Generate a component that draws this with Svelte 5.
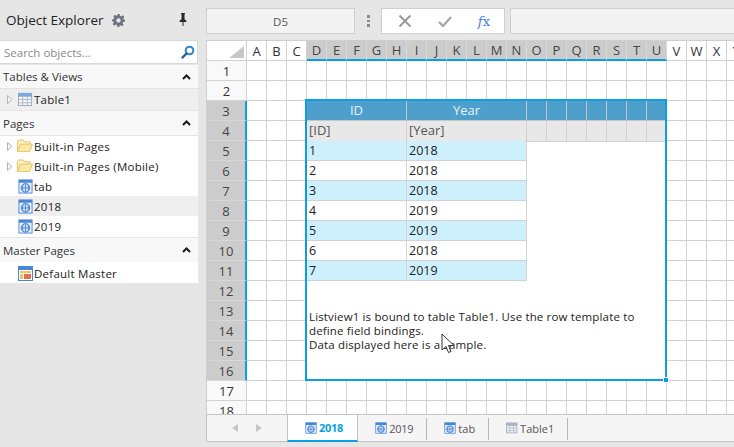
<script>
  const letters = 'ABCDEFGHIJKLMNOPQRSTUVWXY'.split('');
  const rowNums = Array.from({ length: 18 }, (_, i) => i + 1);
  const data = [
    [1, 2018], [2, 2018], [3, 2018], [4, 2019], [5, 2019], [6, 2018], [7, 2019]
  ];
  const extraCols = 7;
  const tabs = [
    { label: '2018', icon: 'page', active: true, num: true },
    { label: '2019', icon: 'page', num: true },
    { label: 'tab', icon: 'page' },
    { label: 'Table1', icon: 'table' }
  ];
  const isSelCol = (i) => i >= 3 && i <= 20;
  const isSelRow = (n) => n >= 3 && n <= 16;
</script>

{#snippet pageIcon(size = 16)}
  <svg class="ico" width={size} height={size} viewBox="0 0 16 16">
    <rect x="1" y="1" width="14" height="14" fill="#eaf2fd" stroke="#4a86d8" />
    <rect x="1" y="1" width="14" height="3" fill="#4a86d8" />
    <circle cx="8" cy="9.5" r="4.6" fill="#cfe0f7" stroke="#3f78c9" />
    <path d="M3.4 9.5h9.2M8 5v9M5.8 5.6c-1.4 2.4-1.4 5.4 0 7.8M10.2 5.6c1.4 2.4 1.4 5.4 0 7.8" fill="none" stroke="#3f78c9" stroke-width=".8" />
  </svg>
{/snippet}

{#snippet tableIcon(color = '#4a86d8', size = 16)}
  <svg class="ico" width={size} height={size} viewBox="0 0 16 16">
    <rect x=".5" y="1.5" width="14" height="13" fill="#f4f6fa" stroke="#9aa6b8" />
    <rect x=".5" y="1.5" width="14" height="3" fill={color} stroke={color} />
    <path d="M5 4.5v10M10 4.5v10M.5 8h14M.5 11.5h14" fill="none" stroke="#aeb6c4" />
  </svg>
{/snippet}

{#snippet folderIcon()}
  <svg class="ico" width="16" height="14" viewBox="0 0 17 15">
    <path d="M.5 13.5V2.5l1-1.5h5l1.5 2h6v2" fill="#fdf0c0" stroke="#e3bf62" />
    <path d="M.5 13.5L3.500 5.500h13l-3 8z" fill="#fde9a6" stroke="#e3bf62" />
  </svg>
{/snippet}

{#snippet caret()}
  <svg class="caret" width="6" height="9" viewBox="0 0 6 9">
    <path d="M.5.5L5 4.500.5 8.500z" fill="#f6f6f6" stroke="#b4b4b4" />
  </svg>
{/snippet}

{#snippet chevron()}
  <svg width="9" height="6" viewBox="0 0 9 6">
    <path d="M1 5l3.500-3.500L8 5" fill="none" stroke="#1a1a1a" stroke-width="2" />
  </svg>
{/snippet}

<div class="app">
  <aside class="explorer">
    <header class="explorer-head">
      <span class="explorer-title">Object Explorer</span>
      <svg class="gear" width="13" height="13" viewBox="0 0 24 24">
        <path fill-rule="evenodd" fill="#6d7480" d="M10 0h4l.7 3.400 2.300 1 2.900-1.900 2.800 2.800-1.900 2.900 1 2.300L24 10v4l-3.400.7-1 2.300 1.900 2.900-2.800 2.800-2.900-1.900-2.300 1L14 24h-4l-.7-3.400-2.300-1-2.900 1.900-2.800-2.800 1.900-2.900-1-2.300L0 14v-4l3.200-.7 1-2.300-1.900-2.900 2.800-2.800 2.900 1.900 2.300-1zM12 8a4 4 0 100 8 4 4 0 000-8z" />
      </svg>
      <svg class="pin" width="8" height="13" viewBox="0 0 8 13">
        <path d="M2 0h4v1H5.500v5L7.500 8v1H4.500v4h-1V9H.5V8l2-2V1H2z" fill="#2b2b2b" />
      </svg>
    </header>

    <div class="search">
      <span>Search objects...</span>
      <svg width="14" height="14" viewBox="0 0 14 14">
        <circle cx="8.500" cy="5.500" r="3.800" fill="none" stroke="#2a86d6" stroke-width="2" />
        <path d="M5.500 8.500L1.500 12.500" stroke="#1d5f9e" stroke-width="2.400" stroke-linecap="round" />
      </svg>
    </div>

    <div class="section-head first"><span>Tables &amp; Views</span>{@render chevron()}</div>
    <div class="item tinted table-item">{@render caret()}{@render tableIcon('#7fa8e0', 15)}<span>Table1</span></div>

    <div class="section-head pages-head"><span>Pages</span>{@render chevron()}</div>
    <div class="tree">
      <div class="item">{@render caret()}{@render folderIcon()}<span>Built-in Pages</span></div>
      <div class="item">{@render caret()}{@render folderIcon()}<span>Built-in Pages (Mobile)</span></div>
      <div class="item leaf">{@render pageIcon(15)}<span>tab</span></div>
      <div class="item leaf tinted">{@render pageIcon(15)}<span>2018</span></div>
      <div class="item leaf">{@render pageIcon(15)}<span>2019</span></div>
    </div>

    <div class="section-head master-head"><span>Master Pages</span>{@render chevron()}</div>
    <div class="tree master">
      <div class="item leaf">
        <svg class="ico" width="15" height="15" viewBox="0 0 15 15">
          <rect x=".5" y=".5" width="14" height="14" fill="#fff" stroke="#4a86d8" />
          <rect x="1" y="1" width="13" height="3" fill="#4a86d8" />
          <rect x="2" y="5" width="11" height="2" fill="#f3c35a" />
          <rect x="2" y="8" width="3" height="5" fill="#f3c35a" />
          <rect x="6" y="8" width="7" height="5" fill="#e2704e" />
        </svg>
        <span>Default Master</span>
      </div>
    </div>
  </aside>

  <main class="workspace">
    <div class="toolbar">
      <div class="name-box">D5</div>
      <div class="dots"><i></i><i></i><i></i></div>
      <div class="formula-actions">
        <svg width="14" height="14" viewBox="0 0 14 14">
          <path d="M1.500 1.500l11 11M12.500 1.500l-11 11" stroke="#9a9a9a" stroke-width="2" />
        </svg>
        <svg width="14" height="11" viewBox="0 0 14 11">
          <path d="M1 6l4 4 8-9" fill="none" stroke="#a8a8a8" stroke-width="2.400" />
        </svg>
        <span class="fx"><em>f</em>x</span>
      </div>
      <div class="formula-input"></div>
    </div>

    <div class="sheet-wrap">
      <div class="sheet">
        <div class="corner">
          <svg width="15" height="12" viewBox="0 0 15 12"><path d="M15 0v12H0z" fill="#c8c8c8" /></svg>
        </div>
        {#each letters as l, i}
          <div class="col-head" class:sel={isSelCol(i)}>{l}</div>
        {/each}
        {#each rowNums as n}
          <div class="row-head" class:sel={isSelRow(n)}>{n}</div>
          {#each letters as _}
            <div class="cell"></div>
          {/each}
        {/each}

        <div class="listview">
          <div class="lv-cols lv-header">
            <div class="lv-id">ID</div>
            <div class="lv-year">Year</div>
            {#each Array(extraCols) as _}<div class="lv-extra"></div>{/each}
          </div>
          <div class="lv-cols lv-template">
            <div>[ID]</div>
            <div>[Year]</div>
            {#each Array(extraCols) as _}<div class="lv-extra"></div>{/each}
          </div>
          {#each data as row, i}
            <div class="lv-row" class:alt={i % 2 === 0}>
              <div>{row[0]}</div>
              <div>{row[1]}</div>
            </div>
          {/each}
          <p class="lv-note">
            Listview1 is bound to table Table1. Use the row template to<br />
            define field bindings.<br />
            Data displayed here is a sample.
          </p>
          <span class="handle"></span>
        </div>

        <svg class="cursor" width="16" height="22" viewBox="0 0 16 22">
          <path d="M1 1v16l4-3.500 2.500 6 2.500-1-2.500-6h5.500z" fill="#fff" stroke="#333" stroke-width="1" />
        </svg>
      </div>
    </div>

    <nav class="tabs">
      <div class="tab-arrows">
        <svg width="6" height="8" viewBox="0 0 6 8"><path d="M6 0v8L0 4z" fill="#c4c4c4" /></svg>
        <svg width="6" height="8" viewBox="0 0 6 8"><path d="M0 0v8l6-4z" fill="#c4c4c4" /></svg>
      </div>
      {#each tabs as t}
        <div class="tab" class:active={t.active} class:num={t.num}>
          {#if t.icon === 'page'}{@render pageIcon(12)}{:else}{@render tableIcon('#a9b4c4', 12)}{/if}
          <span>{t.label}</span>
        </div>
      {/each}
    </nav>
  </main>
</div>

<style>
  :global(body) {
    margin: 0;
    background: #e6e6e6;
  }

  .app {
    display: flex;
    width: 734px;
    height: 447px;
    overflow: hidden;
    font-family: "Open Sans", "Noto Sans", sans-serif;
    color: #222;
    background: #e6e6e6;
  }

  .ico {
    flex: none;
  }

  /* left panel */
  .explorer {
    flex: none;
    width: 198px;
    display: flex;
    flex-direction: column;
  }

  .explorer-head {
    height: 40px;
    display: flex;
    align-items: center;
    padding: 0 0 0 6px;
    box-sizing: border-box;
  }

  .explorer-title {
    font-size: 13.500px;
  }

  .gear {
    margin-left: 8px;
  }

  .pin {
    margin-left: 54px;
    margin-top: -2px;
  }

  .search {
    height: 24px;
    box-sizing: border-box;
    border: 1px solid #d8d8d8;
    border-left: 0;
    background: #fff;
    display: flex;
    align-items: center;
    justify-content: space-between;
    padding: 0 2px 0 4px;
    font-size: 11.500px;
    color: #8a8a8a;
  }

  .section-head {
    height: 24px;
    box-sizing: border-box;
    display: flex;
    align-items: center;
    justify-content: space-between;
    padding: 0 7px 0 3px;
    background: #f8f8f8;
    border-bottom: 1px solid #e4e4e4;
    font-size: 11.500px;
    color: #333;
  }

  .first {
    margin-top: 1px;
  }

  .pages-head {
    height: 25px;
    margin-top: 1px;
  }

  .master-head {
    height: 25px;
    border-top: 1px solid #e4e4e4;
    border-bottom: 0;
  }

  .tree {
    background: #fff;
    padding-bottom: 1px;
  }

  .master {
    padding: 1px 0 0;
  }

  .item {
    height: 20px;
    display: flex;
    align-items: center;
    padding-left: 7px;
    font-size: 11.500px;
    color: #222;
    letter-spacing: .25px;
  }

  .item span {
    margin-left: 1px;
  }

  .item.leaf {
    padding-left: 18px;
  }

  .item.tinted {
    background: #efefef;
  }

  .table-item {
    height: 21px;
    padding-left: 7px;
  }

  .caret {
    margin-right: 4px;
  }

  .table-item .caret {
    margin-right: 5px;
  }

  /* right side */
  .workspace {
    flex: 1;
    min-width: 0;
    margin-left: 8px;
    display: flex;
    flex-direction: column;
    padding-bottom: 5px;
  }

  .toolbar {
    height: 40px;
    flex: none;
    display: flex;
    align-items: flex-start;
    padding-top: 8px;
    box-sizing: border-box;
  }

  .name-box {
    width: 149px;
    height: 26px;
    box-sizing: border-box;
    border: 1px solid #cfcfcf;
    background: #f3f3f3;
    font-size: 11.500px;
    color: #555;
    display: flex;
    align-items: center;
    justify-content: center;
  }

  .dots {
    width: 26px;
    height: 26px;
    display: flex;
    flex-direction: column;
    align-items: center;
    justify-content: center;
    gap: 2px;
  }

  .dots i {
    width: 3px;
    height: 2.500px;
    background: #8a8a8a;
  }

  .formula-actions {
    width: 124px;
    height: 26px;
    box-sizing: border-box;
    border: 1px solid #cfcfcf;
    background: #fff;
    display: flex;
    align-items: center;
    justify-content: space-between;
    padding: 0 14px 0 16px;
  }

  .fx {
    font-family: "DejaVu Serif", "Liberation Serif", serif;
    font-size: 13px;
    color: #3f80e0;
  }

  .formula-input {
    flex: 1;
    height: 26px;
    margin-left: 5px;
    margin-right: -4px;
    box-sizing: border-box;
    border: 1px solid #cfcfcf;
    background: #f3f3f3;
  }

  .sheet-wrap {
    flex: 1;
    min-height: 0;
    overflow: hidden;
    background: #fff;
    border-top: 1px solid #cfcfcf;
    border-left: 1px solid #cfcfcf;
  }

  .sheet {
    position: relative;
    display: grid;
    grid-template-columns: 40px repeat(25, 20px);
    grid-auto-rows: 20px;
    width: 540px;
  }

  .sheet > div {
    box-sizing: border-box;
    border-right: 1px solid #d2d2d2;
    border-bottom: 1px solid #d2d2d2;
  }

  .corner {
    display: flex;
    align-items: flex-end;
    justify-content: flex-end;
    padding: 0 2px 2px 0;
  }

  .col-head,
  .row-head {
    display: flex;
    align-items: center;
    justify-content: center;
    font-size: 13px;
    color: #333;
  }

  .col-head {
    background: #fff;
  }

  .row-head {
    background: #f9f9f9;
  }

  .sheet > .col-head.sel {
    background: #cccccc;
    border-right-color: #d8d8d8;
    border-bottom: 2px solid #0a9fe0;
    color: #444;
  }

  .sheet > .row-head.sel {
    background: #cccccc;
    border-right: 2px solid #0a9fe0;
    border-bottom-color: #d8d8d8;
    color: #444;
  }

  .sheet > .listview {
    position: absolute;
    left: 98px;
    top: 58px;
    width: 362px;
    height: 282px;
    box-sizing: border-box;
    border: 2px solid #0a9fe0;
    background: #fff;
    font-size: 12px;
  }

  .lv-cols {
    display: grid;
    grid-template-columns: 100px 120px repeat(6, 20px) 18px;
    height: 20px;
  }

  .lv-cols > div {
    box-sizing: border-box;
    display: flex;
    align-items: center;
  }

  .lv-header > div {
    background: #4e9fcb;
    color: #e8f3fa;
    justify-content: center;
    font-size: 13px;
    padding-bottom: 1px;
    border-right: 1px solid #c6c6c6;
    border-bottom: 1px solid #c6c6c6;
  }

  .lv-template > div {
    background: #e8e8e8;
    color: #555;
    padding: 0 0 2px 2px;
    font-size: 13px;
    border-right: 1px solid #d0d0d0;
    border-bottom: 1px solid #d0d0d0;
  }

  .lv-template .lv-extra,
  .lv-header .lv-extra {
    padding: 0;
  }

  .lv-cols .lv-extra:last-child {
    border-right: 0;
  }

  .lv-row {
    display: grid;
    grid-template-columns: 100px 120px;
    height: 20px;
  }

  .lv-row > div {
    box-sizing: border-box;
    display: flex;
    align-items: center;
    padding-left: 2px;
    font-size: 12.500px;
    color: #222;
    border-right: 1px solid #d2d2d2;
    border-bottom: 1px solid #d2d2d2;
  }

  .lv-row.alt > div {
    background: #cef0fd;
  }

  .lv-note {
    margin: 29px 0 0 2px;
    font-size: 11.500px;
    line-height: 14px;
    letter-spacing: .15px;
    color: #222;
    white-space: nowrap;
  }

  .handle {
    position: absolute;
    right: -4px;
    bottom: -4px;
    width: 6px;
    height: 6px;
    box-sizing: border-box;
    background: #0a9fe0;
    border: 1px solid #fff;
  }

  .cursor {
    position: absolute;
    left: 234px;
    top: 292px;
  }

  /* sheet tabs */
  .tabs {
    flex: none;
    height: 28px;
    box-sizing: border-box;
    display: flex;
    align-items: stretch;
    background: #f5f5f5;
    border: 1px solid #c4c4c4;
    border-right: 0;
    margin-top: -1px;
    position: relative;
    font-size: 11px;
    color: #555;
  }

  .tab-arrows {
    width: 80px;
    display: flex;
    align-items: center;
    justify-content: center;
    gap: 18px;
  }

  .tab {
    display: flex;
    align-items: center;
    gap: 2px;
    padding: 0 14px 0 17px;
    position: relative;
  }

  .tab.num {
    letter-spacing: -.25px;
  }

  .tab::after {
    content: '';
    position: absolute;
    right: 0;
    top: 3px;
    bottom: 1px;
    width: 1px;
    background: #b8b8b8;
  }

  .tab.active {
    background: #fff;
    color: #0a9fe0;
    font-weight: 700;
    border-left: 1px solid #c4c4c4;
    border-right: 1px solid #c4c4c4;
    border-bottom: 2px solid #0a9fe0;
    border-top: 1px solid #c4c4c4;
    margin-top: -1px;
    margin-bottom: -1px;
  }

  .tab.active::after {
    display: none;
  }
</style>
